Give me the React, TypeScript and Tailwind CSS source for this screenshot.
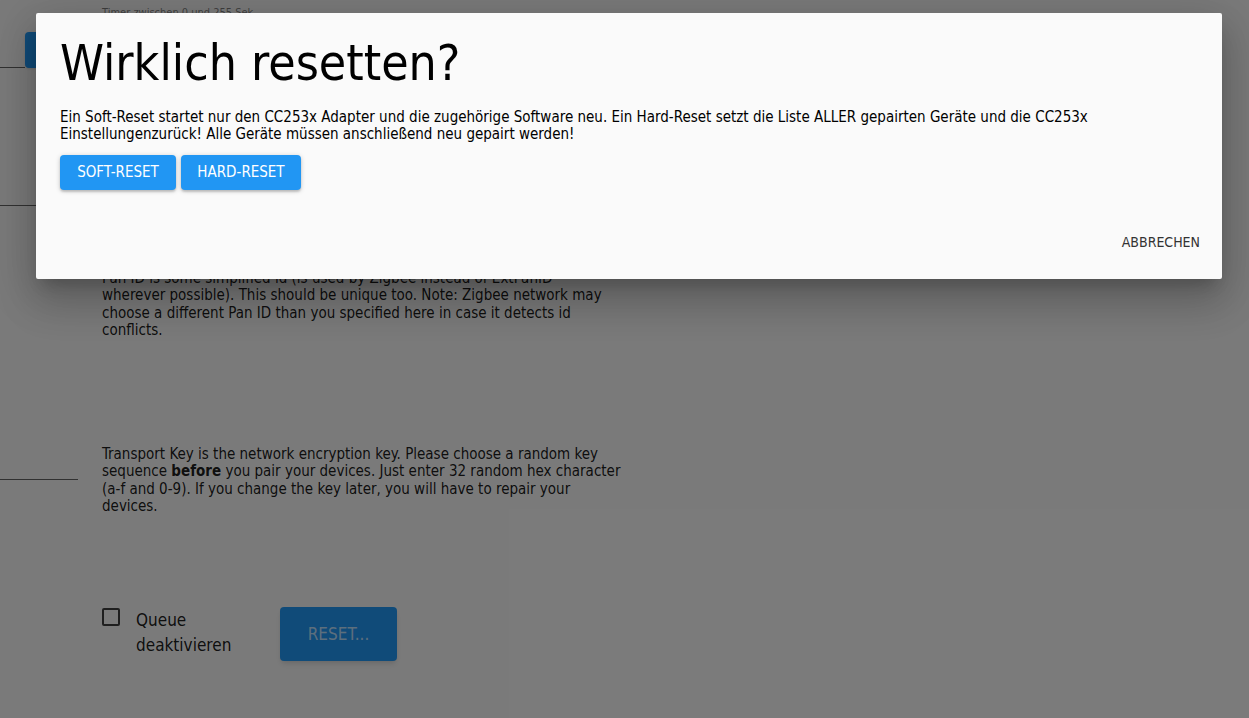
import React from "react";

function Background() {
  return (
    <div className="grid grid-cols-[78px_520px] gap-x-6 text-[15px] leading-[17.3px] text-black/90">
      {/* left column: cut-off inputs */}
      <div className="flex flex-col">
        <div className="mt-[29px] flex items-end">
          <div className="h-[39px] w-[25px] border-b border-black/60" />
          <div className="h-[36px] w-[53px] rounded-[4px] bg-[#2196f3] shadow" />
        </div>
        <div className="mt-[137px] h-px w-[78px] bg-black/60" />
        <div className="mt-[273px] h-px w-[78px] bg-black/60" />
      </div>

      {/* right column */}
      <div className="flex flex-col">
        <div className="pt-[6px] text-[11px] leading-[14px] text-black/50">
          Timer zwischen 0 und 255 Sek.
        </div>
        <p className="mt-[250px]">
          Pan ID is some simplified id (is used by Zigbee instead of ExtPanID
          <br />
          wherever possible). This should be unique too. Note: Zigbee network may choose a different
          Pan ID than you specified here in case it detects id conflicts.
        </p>
        <p className="mt-[107px]">
          Transport Key is the network encryption key. Please choose a random key sequence{" "}
          <b>before</b> you pair your devices. Just enter 32 random hex character (a-f and 0-9). If
          you change the key later, you will have to repair your devices.
        </p>
        <div className="mt-[92px] flex items-start">
          <div className="mt-[1px] h-[18px] w-[18px] rounded-[2px] border-2 border-black/75" />
          <div className="ml-4 mt-[1px] w-[110px] text-[17px] leading-[25px] text-black/90">
            Queue deaktivieren
          </div>
          <button className="ml-[34px] h-[54px] w-[117px] rounded-[4px] bg-[#2196f3] text-[17px] uppercase text-white/70 shadow-md">
            Reset...
          </button>
        </div>
      </div>
    </div>
  );
}

function ResetDialog() {
  return (
    <div className="absolute left-[36px] top-[13px] flex h-[266px] w-[1186px] flex-col rounded-[2px] bg-[#fafafa] shadow-[0_11px_15px_-7px_rgba(0,0,0,0.2),0_24px_38px_3px_rgba(0,0,0,0.14),0_9px_46px_8px_rgba(0,0,0,0.12)]">
      <div className="px-6 pt-[20px]">
        <h2 className="text-[49.5px] leading-[60px] font-normal text-black">Wirklich resetten?</h2>
      </div>
      <div className="px-6 pt-[16px]">
        <p className="text-[15px] leading-[17px] text-black">
          Ein Soft-Reset startet nur den CC253x Adapter und die zugehörige Software neu. Ein
          Hard-Reset setzt die Liste ALLER gepairten Geräte und die CC253x Einstellungenzurück! Alle
          Geräte müssen anschließend neu gepairt werden!
        </p>
        <div className="mt-[12px] flex gap-[5px]">
          <button className="h-[35px] w-[116px] rounded-[4px] bg-[#2196f3] text-[15px] text-white shadow-[0_1px_5px_rgba(0,0,0,0.2),0_2px_2px_rgba(0,0,0,0.14)]">
            SOFT-RESET
          </button>
          <button className="h-[35px] w-[120px] rounded-[4px] bg-[#2196f3] text-[15px] text-white shadow-[0_1px_5px_rgba(0,0,0,0.2),0_2px_2px_rgba(0,0,0,0.14)]">
            HARD-RESET
          </button>
        </div>
      </div>
      <div className="mt-auto flex justify-end px-[22px] pb-[26px]">
        <button className="text-[14px] text-[#333]">ABBRECHEN</button>
      </div>
    </div>
  );
}

export default function App() {
  return (
    <div className="relative h-[718px] w-full overflow-hidden bg-[#f5f5f5] font-['DejaVu_Sans_Condensed','DejaVu_Sans',sans-serif]">
      <Background />
      <div className="absolute inset-0 bg-black/50" />
      <ResetDialog />
    </div>
  );
}
